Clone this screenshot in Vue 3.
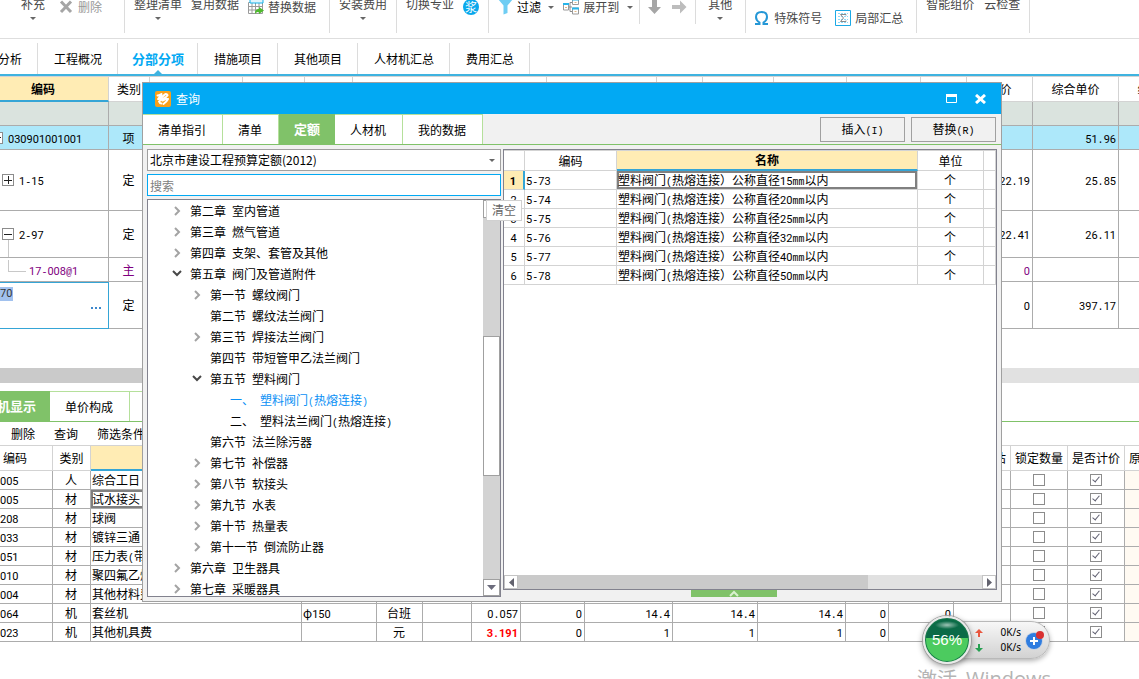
<script setup>
import { h, ref } from 'vue'

// Sets digits, other half-width characters and full-width text each in its own face.
const T = (props) =>
  h(
    'span',
    { class: 't' },
    (props.s.match(/[0-9]+|[ -/:-~]+|[^ -~]+/g) || []).map((run) => {
      if (/^[0-9]/.test(run)) return h('span', { class: 't-num' }, run)
      if (/^[ -~]/.test(run)) return h('span', { class: 't-lat' }, run)
      return run
    })
  )
T.props = ['s']

const pageTabs = ['造价分析', '工程概况', '分部分项', '措施项目', '其他项目', '人材机汇总', '费用汇总']
const activePage = ref('分部分项')

const mainHeads = ['编码', '类别', '', '', '', '', '', '', '', '', '', '', '单价', '综合单价', '综合合价']
const mainRows = [
  { id: 'filter', kind: 'filter', h: 'h24', code: '', type: '', price: '', total: '' },
  { id: 'a', kind: 'current', h: 'h24', box: '-', depth: 'd0', code: '030901001001', type: '项', price: '', total: '51.96' },
  { id: 'b', kind: '', h: 'h61', box: '+', depth: 'd1', code: '1-15', type: '定', price: '22.19', total: '25.85' },
  { id: 'c', kind: 'open', h: 'h47', box: '-', depth: 'd1', code: '2-97', type: '定', price: '22.41', total: '26.11' },
  { id: 'd', kind: 'material', h: 'h24', depth: 'd2', code: '17-008@1', type: '主', price: '0', total: '' },
  { id: 'e', kind: 'editing', h: 'h47', edit: true, code: '70', type: '定', price: '0', total: '397.17' },
]

const lowHeads = ['编码', '类别', '名称', '', '', '', '', '', '', '', '', '', '', '是否暂估', '锁定数量', '是否计价', '原始含量']
const blank = ['', '', '', '', '', '', '', '', '', '']
const lowRows = [
  ['005', '人', '综合工日', ...blank],
  ['005', '材', '试水接头', ...blank],
  ['208', '材', '球阀', ...blank],
  ['033', '材', '镀锌三通', ...blank],
  ['051', '材', '压力表(带弯带阀)', ...blank],
  ['010', '材', '聚四氟乙烯生料带', ...blank],
  ['004', '材', '其他材料费', ...blank],
  ['064', '机', '套丝机', 'φ150', '台班', '', '0.057', '0', '14.4', '14.4', '14.4', '0', '0'],
  ['023', '机', '其他机具费', '', '元', '', '3.191', '0', '1', '1', '1', '0', ''],
]
const lowClass = (r, c) => ({
  code: c === 0,
  mid: c === 1 || c === 4,
  num: c > 5,
  picked: r === 1 && c === 2,
  alert: r === 8 && c === 6,
})

const dialogTabs = ['清单指引', '清单', '定额', '人材机', '我的数据']
const activeDialog = ref('定额')

const tree = [
  ['l0', 'shut', '第二章', '室内管道'],
  ['l0', 'shut', '第三章', '燃气管道'],
  ['l0', 'shut', '第四章', '支架、套管及其他'],
  ['l0', 'open', '第五章', '阀门及管道附件'],
  ['l1', 'shut', '第一节', '螺纹阀门'],
  ['l1', '', '第二节', '螺纹法兰阀门'],
  ['l1', 'shut', '第三节', '焊接法兰阀门'],
  ['l1', '', '第四节', '带短管甲乙法兰阀门'],
  ['l1', 'open', '第五节', '塑料阀门'],
  ['l2 on', '', '一、', '塑料阀门(热熔连接)'],
  ['l2', '', '二、', '塑料法兰阀门(热熔连接)'],
  ['l1', '', '第六节', '法兰除污器'],
  ['l1', 'shut', '第七节', '补偿器'],
  ['l1', 'shut', '第八节', '软接头'],
  ['l1', 'shut', '第九节', '水表'],
  ['l1', 'shut', '第十节', '热量表'],
  ['l1', 'shut', '第十一节', '倒流防止器'],
  ['l0', 'shut', '第六章', '卫生器具'],
  ['l0', 'shut', '第七章', '采暖器具'],
]

const sizes = [15, 20, 25, 32, 40, 50]
const results = sizes.map((d, i) => ({
  n: i + 1,
  code: `5-${73 + i}`,
  name: `塑料阀门(热熔连接）公称直径${d}mm以内`,
}))
</script>

<template>
  <div class="app">
    <header class="ribbon">
      <div class="group g1">
        <button class="big">补充<i class="caret"></i></button>
        <button class="mid muted">
          <svg width="16" height="16" viewBox="0 0 16 16"><path d="M3 2.500 13 13M13 2.500 3 13" stroke="#a5a5a5" stroke-width="3" /></svg>
          删除
        </button>
      </div>
      <div class="group g2">
        <button class="big">整理清单<i class="caret"></i></button>
        <button class="big">复用数据</button>
        <button class="mid">
          <svg width="16" height="16" viewBox="0 0 16 16">
            <path d="M.5 3.500h14v11H.5zM.5 7.500h14M.5 11h14M4 4v10.500M7.500 4v10.500M11 4v10.500" fill="#fff" stroke="#9a9a9a" />
            <path d="M2 0h13v4H2z" fill="#dff4fc" stroke="#17b2ea" />
            <path d="M7 15c0-4 1.500-5 4-5V8l5 3.500-5 3.500v-2c-2 0-3 .5-4 2z" fill="#4fba2e" />
          </svg>
          替换数据
        </button>
      </div>
      <div class="group g3"><button class="big">安装费用<i class="caret"></i></button></div>
      <div class="group g3">
        <button class="big">切换专业</button>
        <button class="mid" aria-label="浆"><span class="disc">浆</span></button>
      </div>
      <div class="group g5">
        <button class="mid dark">
          <svg width="16" height="16" viewBox="0 0 16 16"><path d="M0 0h15L9.500 6.500V14l-4 1.500v-9z" fill="#6fcdf3" /></svg>
          过滤<i class="caret"></i>
        </button>
        <button class="mid">
          <svg width="16" height="16" viewBox="0 0 16 16">
            <path d="M5 8h4M7 3.500v9M7 3.500h2M7 12.500h2" stroke="#8d8d8d" fill="none" />
            <path d="M.5 5h5v6h-5zM9.500.5h6v5h-6zM9.500 9h6v6h-6z" fill="#fff" stroke="#9a9a9a" />
            <path d="M0 5h6M9 .5h7M9 9.500h7" stroke="#27b5ea" stroke-width="2" />
            <path d="M2 8.500h2M11.500 3.500h2M11.500 12.500h2" stroke="#e2b784" />
          </svg>
          展开到<i class="caret"></i>
        </button>
      </div>
      <div class="group g6">
        <button class="mid" aria-label="下移">
          <svg width="16" height="16" viewBox="0 0 16 16"><path d="M6 0h5v8h4l-6.500 7L2 8h4z" fill="#a6a6a6" /></svg>
        </button>
        <button class="mid" aria-label="右移">
          <svg width="16" height="16" viewBox="0 0 16 16"><path d="M1 6h8V1.500l6.500 6.500L9 14.500V10H1z" fill="#bdbdbd" /></svg>
        </button>
      </div>
      <div class="group g7"><button class="big">其他<i class="caret"></i></button></div>
      <div class="group g8">
        <button class="low">
          <svg width="16" height="16" viewBox="0 0 16 16"><path d="M1 14h4.500v-1.500C3 11 2 9.500 2 7c0-3 2-5 5.500-5S13 4 13 7c0 2.500-1 4-3.500 5.500V14H14" fill="none" stroke="#2497d6" stroke-width="2" /></svg>
          特殊符号
        </button>
        <button class="low">
          <svg width="16" height="16" viewBox="0 0 16 16">
            <path d="M.5.5h15v15H.5z" fill="#fff" stroke="#1ba9e6" />
            <path d="M3 3.500h10M3 6.500h10M3 9.500h10M3 12.500h10" stroke="#8fd9f7" stroke-dasharray="2 1" />
            <path d="M11 5.500V4.500H5.500L8.500 8l-3 3.500H11v-1" fill="none" stroke="#8a8a8a" />
          </svg>
          局部汇总
        </button>
      </div>
      <div class="group g9">
        <button class="big">智能组价</button>
        <button class="big">云检查</button>
      </div>
    </header>

    <nav class="page-tabs">
      <button v-for="t in pageTabs" :key="t" :class="{ on: t === activePage }" @click="activePage = t">{{ t }}</button>
    </nav>

    <section class="main-area">
      <table class="grid main">
        <colgroup>
          <col class="w131" /><col class="w41" /><col class="w93" /><col class="w62" /><col class="w48" />
          <col class="w194" /><col class="w110" /><col class="w46" /><col class="w71" /><col class="w73" />
          <col class="w74" /><col class="w46" /><col class="w66" /><col class="w86" /><col class="w86" />
        </colgroup>
        <thead>
          <tr><th v-for="(t, i) in mainHeads" :key="i" :class="{ hot: i === 0 }">{{ t }}</th></tr>
        </thead>
        <tbody>
          <tr v-for="r in mainRows" :key="r.id" :class="[r.kind, r.h]">
            <td>
              <div v-if="r.edit" class="edit">
                <input value="70" aria-label="编码" />
                <button aria-label="更多"><i></i><i></i><i></i></button>
              </div>
              <div v-else-if="r.code" :class="['node', r.depth]">
                <span v-if="r.box" :class="['box', { plus: r.box === '+' }]"></span>
                <span v-else class="elbow"></span>
                <T :s="r.code" />
              </div>
            </td>
            <td class="mid">{{ r.type }}</td>
            <td v-for="k in 10" :key="k"></td>
            <td class="num"><T :s="r.price" /></td>
            <td class="num"><T :s="r.total" /></td>
            <td></td>
          </tr>
        </tbody>
      </table>
    </section>
    <div class="hbar"><i></i><i></i></div>

    <section class="detail">
      <nav class="green-tabs low-tabs">
        <button class="on">工料机显示</button>
        <button>单价构成</button>
        <button>标准换算</button>
      </nav>
      <div class="tools"><button>删除</button><button>查询</button><button>筛选条件</button></div>
      <table class="grid lower">
        <colgroup>
          <col class="w75" /><col class="w38" /><col class="w211" /><col class="w75" /><col class="w46" />
          <col class="w49" /><col class="w49" /><col class="w64" /><col class="w88" /><col class="w85" />
          <col class="w88" /><col class="w43" /><col class="w65" /><col class="w57" /><col class="w57" />
          <col class="w57" /><col class="w57" />
        </colgroup>
        <thead>
          <tr><th v-for="(t, i) in lowHeads" :key="i" :class="{ hot: i === 2 }">{{ t }}</th></tr>
        </thead>
        <tbody>
          <tr v-for="(r, ri) in lowRows" :key="ri">
            <td v-for="(c, ci) in r" :key="ci" :class="lowClass(ri, ci)"><T :s="c" /></td>
            <td></td>
            <td class="mid"><input type="checkbox" aria-label="锁定数量" /></td>
            <td class="mid"><input type="checkbox" checked aria-label="是否计价" /></td>
            <td class="cream"></td>
          </tr>
        </tbody>
      </table>
    </section>

    <div class="watermark"><span>激活</span><span>Windows</span></div>

    <section class="dialog" role="dialog" aria-label="查询">
      <header class="title">
        <svg width="16" height="16" viewBox="0 0 16 16">
          <rect width="16" height="16" rx="2" fill="#f9a01b" />
          <g fill="none" stroke="#fff" stroke-linecap="round" stroke-linejoin="round">
            <path d="M2.500 4.500C4 4.500 5.500 3.500 6.500 3 6 5 4.500 6 3 8c2 0 5-3 7.500-5 1.500 0 2 1 2 1.500C11 6.500 7 8 4 10.500c.5 1.500 1.500 2 2.500 2" stroke-width="2" />
            <path d="M8.500 13c1.500-1 3.500-3 4.500-5M7.500 9.500l4-2" stroke-width="2" />
          </g>
        </svg>
        <h1>查询</h1>
        <button aria-label="最大化"><svg width="12" height="10" viewBox="0 0 12 10"><path d="M.5 1h10v7.500H.5z" fill="none" stroke="#fff" /><path d="M0 1.500h11" stroke="#fff" stroke-width="3" /></svg></button>
        <button aria-label="关闭"><svg width="12" height="10" viewBox="0 0 12 10"><path d="M1 1l9 8M10 1l-9 8" stroke="#fff" stroke-width="3" /></svg></button>
      </header>
      <div class="bar">
        <nav class="green-tabs">
          <button v-for="t in dialogTabs" :key="t" :class="{ on: t === activeDialog }" @click="activeDialog = t">{{ t }}</button>
        </nav>
        <button class="act"><T s="插入(I)" /></button>
        <button class="act"><T s="替换(R)" /></button>
      </div>
      <div class="body">
        <div class="left">
          <div class="pick">
            <select aria-label="定额库"><option>北京市建设工程预算定额(2012)</option></select>
            <i class="caret"></i>
          </div>
          <input class="search" placeholder="搜索" aria-label="搜索" />
          <div class="treebox">
            <ul role="tree">
              <li v-for="(n, i) in tree" :key="i" :class="n[0]" role="treeitem">
                <svg width="12" height="12" viewBox="0 0 12 12">
                  <path v-if="n[1] === 'shut'" d="M4 2l4 4-4 4" fill="none" stroke="#a3a3a3" stroke-width="2" />
                  <path v-if="n[1] === 'open'" d="M2 3l4 4 4-4" fill="none" stroke="#484848" stroke-width="2" />
                </svg>
                <span>{{ n[2] }}</span>
                <T :s="n[3]" />
              </li>
            </ul>
            <div class="vbar">
              <b></b><i></i><b></b><i></i>
              <b><svg width="9" height="5" viewBox="0 0 9 5"><path d="M0 0h9L4.500 5z" fill="#6c6c7c" /></svg></b>
            </div>
          </div>
        </div>
        <div class="right">
          <div class="panel">
            <table class="grid result">
              <colgroup><col class="w21" /><col class="w92" /><col class="w301" /><col class="w66" /><col /></colgroup>
              <thead>
                <tr><th></th><th>编码</th><th class="hot">名称</th><th>单位</th><th></th></tr>
              </thead>
              <tbody>
                <tr v-for="r in results" :key="r.n" :class="{ sel: r.n === 1 }">
                  <td class="mid"><T :s="String(r.n)" /></td>
                  <td><T :s="r.code" /></td>
                  <td><T :s="r.name" /></td>
                  <td class="mid">个</td>
                  <td></td>
                </tr>
              </tbody>
            </table>
            <div class="rbar">
              <b><svg width="5" height="9" viewBox="0 0 5 9"><path d="M5 0v9L0 4.500z" fill="#62626e" /></svg></b>
              <i></i><u></u>
              <b><svg width="5" height="9" viewBox="0 0 5 9"><path d="M0 0v9l5-4.500z" fill="#62626e" /></svg></b>
            </div>
          </div>
          <button class="handle" aria-label="展开">
            <svg width="10" height="7" viewBox="0 0 10 7"><path d="M1 6l4-4 4 4" fill="none" stroke="#d9f0ce" stroke-width="2" /></svg>
          </button>
        </div>
      </div>
      <div class="tip">清空</div>
    </section>

    <aside class="meter">
      <div class="pill">
        <div class="rates">
          <span><svg width="8" height="8" viewBox="0 0 8 8"><path d="M4 0l4 4H5v4H3V4H0z" fill="#e9573f" /></svg>0K/s</span>
          <span><svg width="8" height="8" viewBox="0 0 8 8"><path d="M4 8l4-4H5V0H3v4H0z" fill="#27a052" /></svg>0K/s</span>
        </div>
        <svg width="22" height="22" viewBox="0 0 22 22">
          <circle cx="10" cy="12" r="9" fill="#c9d3e2" />
          <circle cx="10" cy="12" r="8" fill="#2f7de0" />
          <path d="M10 8v8M6 12h8" stroke="#fff" stroke-width="2" />
          <circle cx="16" cy="6" r="4" fill="#d93030" />
        </svg>
      </div>
      <div class="ball"><span>56%</span></div>
    </aside>
  </div>
</template>

<style>
body {
  background: #fff;
}
.t {
  white-space: pre;
}
.t-num {
  font-family: Roboto, sans-serif;
  font-size: 11px;
  line-height: 0;
}
.t-lat {
  font-family: "Liberation Mono", monospace;
  font-size: 10px;
  line-height: 0;
}
</style>

<style scoped>
.app {
  position: relative;
  height: 100vh;
  overflow: hidden;
  background: #fff;
  color: #000;
  font: 12px/16px "Noto Sans CJK SC", sans-serif;
}
button,
input,
select {
  font: inherit;
  color: inherit;
  margin: 0;
  padding: 0;
  border: 0;
  border-radius: 0;
  background: none;
  box-sizing: border-box;
}
button {
  white-space: nowrap;
  cursor: pointer;
}
svg {
  display: block;
  flex: none;
}
.caret {
  flex: none;
  border: 3px solid transparent;
  border-top: 3px solid #666;
  border-bottom: 0;
}

/* ribbon */
.ribbon {
  display: flex;
  align-items: flex-start;
  height: 38px;
  border-bottom: 1px solid #dedede;
  color: #484848;
}
.group {
  display: flex;
  align-items: flex-start;
  flex: none;
  height: 33px;
  border-right: 1px solid #dcdcdc;
}
.g1 { padding: 0 22px 0 21px; gap: 13px; }
.g2 { padding: 0 13px 0 9px; gap: 9px; }
.g3 { padding: 0 9px; gap: 9px; }
.g5 { padding: 0 6px 0 9px; gap: 9px; height: 24px; }
.g6 { padding: 0 8px 0 6px; gap: 9px; height: 24px; }
.g7 { padding: 0 13px 0 12px; }
.g8 { padding: 0 13px 0 8px; gap: 13px; }
.g9 { padding: 0 9px; gap: 10px; }
.big {
  display: flex;
  flex-direction: column;
  align-items: center;
  gap: 5px;
  margin-top: -4px;
}
.mid.muted { color: #989898; }
.group .mid,
.low {
  display: flex;
  align-items: center;
  gap: 4px;
}
.group .mid { margin-top: -1px; }
.group .dark {
  gap: 3px;
  color: #000;
}
.mid .caret { margin-left: 4px; }
.low { margin-top: 10px; }
.disc {
  width: 16px;
  height: 16px;
  border-radius: 50%;
  background: #0aa8ec;
  color: #fff;
  font-size: 12px;
  line-height: 15px;
}

/* page tabs */
.page-tabs {
  display: flex;
  padding-top: 4px;
  margin-left: -42px;
  border-bottom: 2px solid #3fb3e0;
}
.page-tabs button {
  position: relative;
  height: 31px;
  padding: 0 15px 0 16px;
  border-right: 1px solid #dcdcdc;
}
.page-tabs .on {
  padding: 0 13px 0 14px;
  color: #02a9f3;
  font-size: 13px;
  font-weight: 700;
}
.page-tabs .on::after {
  content: "";
  position: absolute;
  left: 50%;
  bottom: 0;
  margin-left: -4px;
  border: 4px solid transparent;
  border-top: 0;
  border-bottom-color: #3fb3e0;
}

/* grids */
.grid {
  table-layout: fixed;
  border-collapse: separate;
  border-spacing: 0;
  width: 0;
}
.grid th,
.grid td {
  box-sizing: border-box;
  padding: 0 2px 0 1px;
  border-right: 1px solid #acacac;
  border-bottom: 1px solid #acacac;
  overflow: hidden;
  white-space: nowrap;
  text-align: left;
  font-weight: 400;
}
.grid th {
  padding: 0;
  border-color: #d3d3d3;
  text-align: center;
}
.grid th.hot {
  background: #ffecb4;
  border-bottom: 2px solid #35a5d6;
  font-weight: 700;
}
.grid td.mid { text-align: center; }
.grid td.num { text-align: right; }
.w21 { width: 21px; } .w38 { width: 38px; } .w41 { width: 41px; } .w43 { width: 43px; }
.w46 { width: 46px; } .w48 { width: 48px; } .w49 { width: 49px; } .w57 { width: 57px; }
.w62 { width: 62px; } .w64 { width: 64px; } .w65 { width: 65px; } .w66 { width: 66px; }
.w71 { width: 71px; } .w73 { width: 73px; } .w74 { width: 74px; } .w75 { width: 75px; }
.w85 { width: 85px; } .w86 { width: 86px; } .w88 { width: 88px; } .w92 { width: 92px; }
.w93 { width: 93px; } .w110 { width: 110px; } .w131 { width: 131px; } .w194 { width: 194px; }
.w211 { width: 211px; } .w301 { width: 301px; }

.main-area {
  height: 291px;
  border-top: 1px solid #d3d3d3;
  overflow: hidden;
}
.main,
.lower {
  margin-left: -22px;
}
.main th { height: 25px; }
.h24 { height: 24px; }
.h47 { height: 47px; }
.h61 { height: 61px; }
.filter td { background: #dae3de; }
.current td { background: #ade8fa; }
.material { color: #800080; }
.main td:first-child { padding: 0; }
.node {
  display: flex;
  align-items: center;
  gap: 5px;
}
.d0 { padding-left: 13px; }
.d1 { padding-left: 24px; }
.d2 { padding-left: 30px; gap: 3px; }
.box {
  position: relative;
  box-sizing: border-box;
  width: 12px;
  height: 12px;
  border: 1px solid #8c8c8c;
  background:
    linear-gradient(#222, #222) center / 8px 1px no-repeat,
    #fff;
}
.box.plus {
  background:
    linear-gradient(#222, #222) center / 8px 1px no-repeat,
    linear-gradient(#222, #222) center / 1px 8px no-repeat,
    #fff;
}
.open .box::after {
  content: "";
  position: absolute;
  left: 5px;
  top: 11px;
  height: 18px;
  border-left: 1px solid #c8c8c8;
}
.elbow {
  width: 18px;
  height: 12px;
  box-sizing: border-box;
  align-self: flex-start;
  margin-top: -2px;
  border-left: 1px solid #c8c8c8;
  border-bottom: 1px solid #c8c8c8;
}
.main .editing td:first-child {
  border-color: #35a5d6;
  box-shadow: inset 0 1px #35a5d6;
}
.edit {
  display: flex;
  justify-content: space-between;
  height: 46px;
  padding: 5px 7px 0 22px;
  box-sizing: border-box;
}
.edit input {
  width: 13px;
  height: 14px;
  background: #a1c1ee;
  color: #333;
  font: 11px/14px Roboto, sans-serif;
}
.edit button {
  display: flex;
  align-self: center;
  gap: 2px;
}
.edit button i {
  width: 2px;
  height: 2px;
  background: #3d87cc;
}
.hbar {
  display: flex;
  height: 15px;
  background: #e1e1e1;
}
.hbar i { flex: 1; }
.hbar i:first-child { background: #cacaca; }

/* green tab strips */
.green-tabs {
  display: flex;
}
.green-tabs button {
  height: 31px;
  padding: 0 16px 0 15px;
  border-top: 1px solid #b5e09b;
  border-right: 1px solid #b5e09b;
  background: #fff;
}
.green-tabs .on {
  padding: 0 14px;
  border: 0;
  background: #80c269;
  color: #fff;
  font-size: 13px;
  font-weight: 700;
}
.detail { padding-top: 8px; }
.low-tabs {
  margin-left: -43px;
  border-bottom: 1px solid #80c269;
}
.low-tabs button { height: 30px; }
.tools {
  display: flex;
  gap: 19px;
  height: 23px;
  padding-left: 11px;
}
.lower th {
  height: 26px;
  border-top: 1px solid #d3d3d3;
}
.lower tr { height: 19px; }
.lower td.code { padding-left: 22px; }
.lower td.cream { background: #fffaf2; }
.lower td.picked { box-shadow: inset 0 0 0 2px #808080; }
.lower td.alert { color: #f00; font-weight: 700; }
.lower input {
  display: block;
  appearance: none;
  width: 12px;
  height: 12px;
  margin: 0 auto;
  border: 1px solid #8c8c8c;
  background: #fff;
  position: relative;
}
.lower input:checked::after {
  content: "";
  position: absolute;
  left: 3px;
  top: 0;
  width: 3px;
  height: 6px;
  border: solid #5f5f70;
  border-width: 0 1px 1px 0;
  transform: rotate(40deg);
}

/* dialog */
.dialog {
  position: absolute;
  left: 142px;
  right: 137px;
  top: 82px;
  bottom: 77px;
  display: flex;
  flex-direction: column;
  border: 1px solid #a0a0a0;
  background: #f1f1f1;
}
.title {
  display: flex;
  align-items: center;
  height: 31px;
  padding: 0 14px 0 12px;
  background: #02a9f3;
  color: #fff;
}
.title h1 {
  flex: 1;
  margin: 0 0 0 5px;
  font-size: 12px;
  font-weight: 400;
}
.title button + button { margin-left: 17px; }
.bar {
  display: flex;
  align-items: center;
  gap: 6px;
  padding-right: 5px;
  border-bottom: 1px solid #80c269;
}
.bar nav {
  flex: 1;
  height: 30px;
}
.bar nav button { height: 30px; }
.bar nav .on { padding: 0 15px; }
.act {
  width: 85px;
  height: 25px;
  border: 1px solid #a0a0a0;
  background: #f1f1f1;
}
.body {
  flex: 1;
  min-height: 0;
  display: grid;
  grid-template-columns: 354px 1fr;
  gap: 2px;
  padding: 4px;
}
.left,
.right {
  display: flex;
  flex-direction: column;
  min-width: 0;
  min-height: 0;
}
.left { gap: 3px; }
.pick {
  position: relative;
  display: flex;
  height: 22px;
  background: #fff;
}
.pick select {
  flex: 1;
  appearance: none;
  padding-left: 2px;
  border: 1px solid #a0a0a0;
}
.pick .caret {
  position: absolute;
  right: 6px;
  top: 10px;
}
.search {
  height: 22px;
  border: 1px solid #02a9f3;
  background: #fff;
  padding: 0 2px;
}
.search::placeholder { color: #808080; }
.treebox {
  flex: 1;
  min-height: 0;
  display: flex;
  border: 1px solid #82828e;
  background: #fff;
}
.treebox ul {
  flex: 1;
  margin: 0;
  padding: 0;
  list-style: none;
  overflow: hidden;
}
.treebox li {
  display: flex;
  align-items: center;
  height: 21px;
}
.treebox li svg { margin-right: 7px; }
.treebox li span + span { margin-left: 6px; }
.l0 { padding-left: 23px; }
.l1 { padding-left: 43px; }
.l2 { padding-left: 63px; }
.on.l2 { color: #0a90f5; }
.vbar {
  display: grid;
  grid-template-rows: 18px 118fr 141fr 103fr 17px;
  width: 17px;
  background: #d3d3d3;
}
.vbar b {
  display: grid;
  place-items: center;
  border: 1px solid #a0a0a0;
  background: #fff;
}
.panel {
  flex: 1;
  display: flex;
  flex-direction: column;
  justify-content: space-between;
  border: 1px solid #82828e;
  background: #fff;
}
.grid.result { width: 100%; }
.result th { height: 21px; }
.result tr { height: 19px; }
.result th,
.result td { border-color: #d3d3d3; }
.result th { border-top: 1px solid #d3d3d3; }
.result .sel td:first-child {
  background: #ffecb4;
  border-right: 2px solid #35a5d6;
  font-weight: 700;
}
.result .sel td:nth-child(3) { box-shadow: inset 0 0 0 2px #808080; }
.rbar {
  display: grid;
  grid-template-columns: 14px 350fr 114fr 14px;
  height: 14px;
  background: #e1e1e1;
}
.rbar i { background: #cacaca; }
.rbar b {
  display: grid;
  place-items: center;
  border: 1px solid #c4c4c4;
  background: #fff;
}
.handle {
  display: grid;
  justify-content: center;
  width: 86px;
  height: 7px;
  margin-left: 38%;
  background: #80c269;
}
.tip {
  position: absolute;
  left: 343px;
  top: 117px;
  padding: 1px 5px 2px;
  border: 1px solid #d0d0d0;
  background: #fff;
  color: #666;
}

/* floating meter */
.meter {
  position: absolute;
  right: 89px;
  bottom: 15px;
  width: 127px;
  height: 48px;
  display: flex;
  align-items: center;
}
.pill {
  flex: 1;
  display: flex;
  align-items: center;
  gap: 3px;
  height: 38px;
  margin-left: 18px;
  padding-left: 33px;
  box-sizing: border-box;
  border: 1px solid #b9b9b9;
  border-radius: 4px 19px 19px 4px;
  background: linear-gradient(#f7f7f7, #d2d2d2);
  box-shadow: 0 2px 5px rgba(0, 0, 0, 0.3);
}
.rates {
  display: grid;
  width: 46px;
  font: 10px/15px "Noto Sans", sans-serif;
}
.rates span {
  display: flex;
  align-items: center;
  justify-content: space-between;
}
.ball {
  position: absolute;
  left: 0;
  top: 0;
  display: grid;
  place-items: center;
  width: 48px;
  height: 48px;
  box-sizing: border-box;
  border: 2px solid #e9e9e9;
  border-radius: 50%;
  background:
    radial-gradient(ellipse 12px 4px at 50% 16%, rgba(255, 255, 255, 0.6), transparent),
    linear-gradient(#0b6b47 45%, #4ccb5f 45%);
  box-shadow: 0 0 0 1px #a0a0a0, 0 2px 6px rgba(0, 0, 0, 0.45), inset 0 0 0 1px #17794b;
  color: #fff;
  font: 15px/18px "Liberation Sans", sans-serif;
}
.watermark {
  position: absolute;
  right: 88px;
  bottom: -14px;
  display: flex;
  gap: 9px;
  color: #b4b4b4;
  font-size: 20px;
  line-height: 28px;
}
.watermark span + span { font-family: "Open Sans", sans-serif; }
</style>
